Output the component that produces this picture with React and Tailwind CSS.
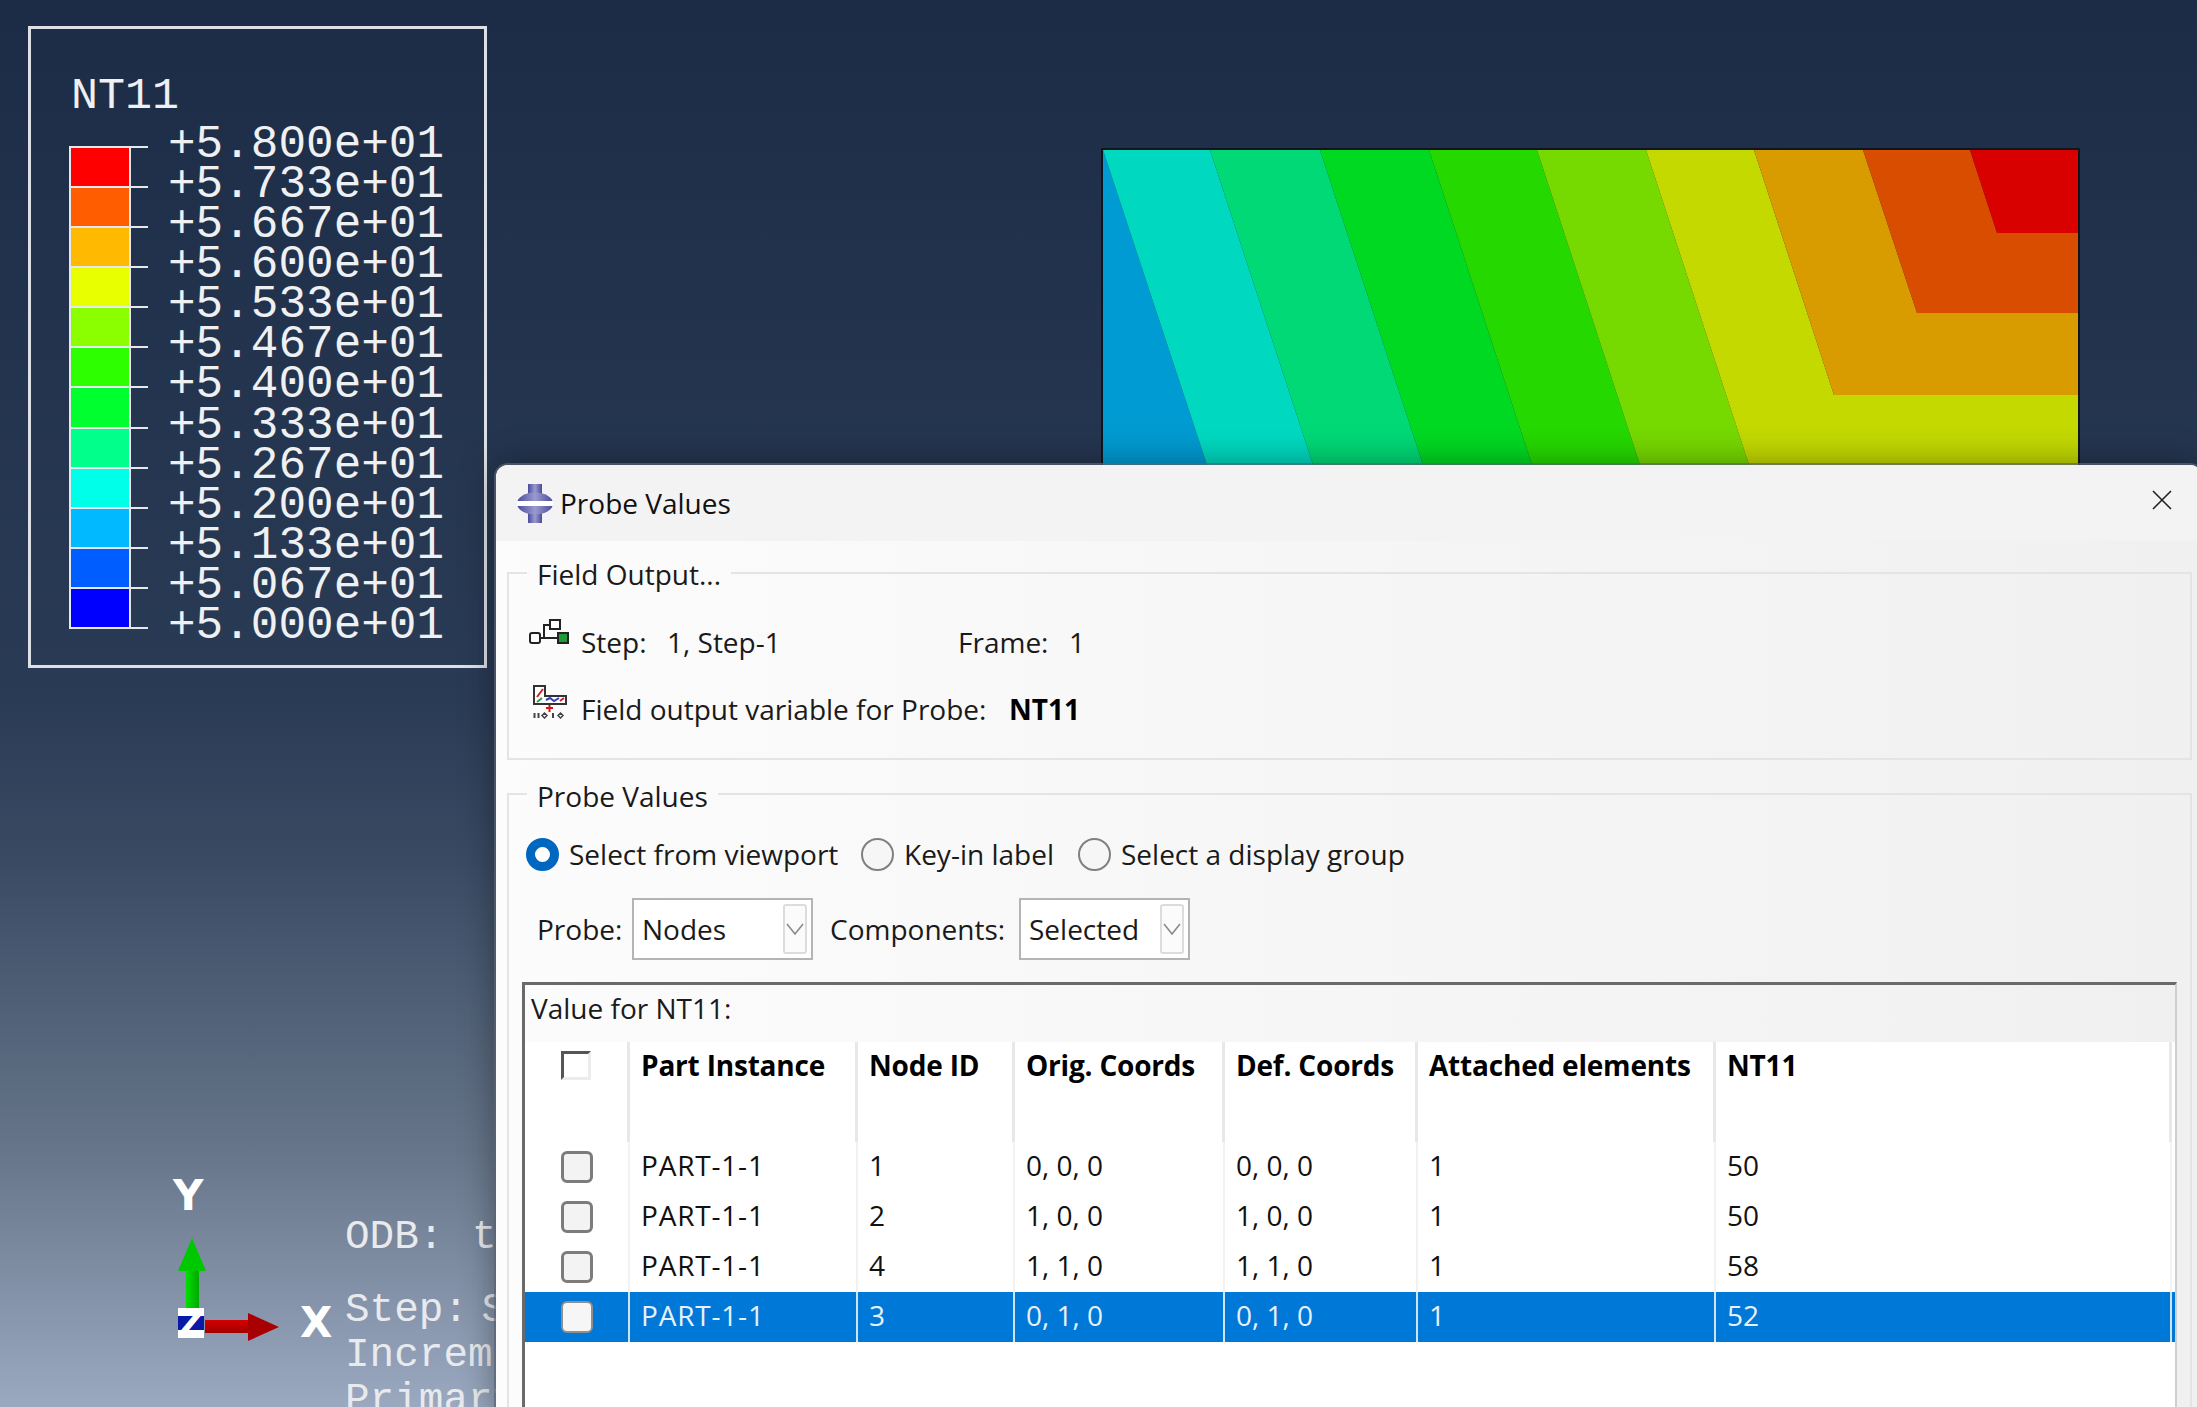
import React from "react";

const LEGEND_COLORS = [
  "bg-[#ff0000]",
  "bg-[#ff5d00]",
  "bg-[#ffb900]",
  "bg-[#e8ff00]",
  "bg-[#8bff00]",
  "bg-[#2eff00]",
  "bg-[#00ff2e]",
  "bg-[#00ff8b]",
  "bg-[#00ffe8]",
  "bg-[#00b9ff]",
  "bg-[#005dff]",
  "bg-[#0000ff]",
];

const LEGEND_VALUES = [
  "+5.800e+01",
  "+5.733e+01",
  "+5.667e+01",
  "+5.600e+01",
  "+5.533e+01",
  "+5.467e+01",
  "+5.400e+01",
  "+5.333e+01",
  "+5.267e+01",
  "+5.200e+01",
  "+5.133e+01",
  "+5.067e+01",
  "+5.000e+01",
];

const BANDS = [
  ["#009bd2", "1103,150 1212,480 1103,480"],
  ["#00d9c0", "1103,150 1210,150 1318,480 1212,480"],
  ["#00d976", "1210,150 1320,150 1428,480 1318,480"],
  ["#00d922", "1320,150 1429,150 1537,480 1428,480"],
  ["#25d900", "1429,150 1537,150 1645,480 1537,480"],
  ["#76d900", "1537,150 1646,150 1754,480 1645,480"],
  ["#c3d900", "1646,150 1754,150 1834,395 2078,395 2078,480 1754,480"],
  ["#d99c00", "1754,150 1863,150 1917,313 2078,313 2078,395 1834,395"],
  ["#d94d00", "1863,150 1970,150 1997,233 2078,233 2078,313 1917,313"],
  ["#d90000", "1970,150 2078,150 2078,233 1997,233"],
];

const ROWS = [
  { part: "PART-1-1", id: "1", orig: "0, 0, 0", def: "0, 0, 0", el: "1", val: "50" },
  { part: "PART-1-1", id: "2", orig: "1, 0, 0", def: "1, 0, 0", el: "1", val: "50" },
  { part: "PART-1-1", id: "4", orig: "1, 1, 0", def: "1, 1, 0", el: "1", val: "58" },
  { part: "PART-1-1", id: "3", orig: "0, 1, 0", def: "0, 1, 0", el: "1", val: "52", selected: true },
];

const HEADERS = ["Part Instance", "Node ID", "Orig. Coords", "Def. Coords", "Attached elements", "NT11"];

const GRID = "grid grid-cols-[105px_228px_157px_210px_193px_298px_456px]";

const Legend = () => (
  <div className="absolute left-[28px] top-[26px] w-[459px] h-[642px] border-[3px] border-[#dde1e6] pl-[38px] pt-[48px] font-['Liberation_Mono',monospace] text-[46px] text-[#eef0f2]">
    <div className="ml-[2px] h-[40px] text-[45px] leading-[40px]">NT11</div>
    <div className="-mt-[4px] flex items-start">
      <div className="mt-[33px] flex flex-col">
        {LEGEND_COLORS.map((color) => (
          <div key={color} className="flex h-[40.08px] items-start">
            <div className={`h-full w-[62px] border-x-2 border-t-2 border-[#e6e8ee] ${color}`} />
            <div className="h-[2px] w-[17px] bg-[#e6e8ee]" />
          </div>
        ))}
        <div className="flex h-[2px]">
          <div className="w-[62px] bg-[#e6e8ee]" />
          <div className="w-[17px] bg-[#e6e8ee]" />
        </div>
      </div>
      <div className="ml-[20px] mt-[12px] flex flex-col">
        {LEGEND_VALUES.map((value) => (
          <div key={value} className="h-[40.08px] leading-[40px]">
            {value}
          </div>
        ))}
      </div>
    </div>
  </div>
);

const Contour = () => (
  <svg
    className="absolute left-[1100px] top-[148px] w-[982px] h-[330px]"
    viewBox="1100 148 982 330"
  >
    {BANDS.map(([fill, points]) => (
      <polygon key={fill} fill={fill} points={points} />
    ))}
    <rect x="1102" y="149" width="977" height="340" fill="none" stroke="#10151c" strokeWidth="2" />
  </svg>
);

const Triad = () => (
  <>
    <svg className="absolute left-[170px] top-[1230px] w-[115px] h-[115px]" viewBox="170 1230 115 115">
      <defs>
        <linearGradient id="greenShaft" x1="0" x2="1" y1="0" y2="0">
          <stop offset="0" stopColor="#00e000" />
          <stop offset="1" stopColor="#00a800" />
        </linearGradient>
        <linearGradient id="redShaft" x1="0" x2="0" y1="0" y2="1">
          <stop offset="0" stopColor="#d40000" />
          <stop offset="1" stopColor="#a00000" />
        </linearGradient>
      </defs>
      <rect x="186" y="1269" width="13" height="40" fill="url(#greenShaft)" />
      <polygon points="192,1238 206,1271 178,1271" fill="#00c800" />
      <rect x="205" y="1320" width="45" height="13" fill="url(#redShaft)" />
      <polygon points="248,1313 279,1327 248,1341" fill="#a80000" />
      <rect x="178" y="1308" width="26" height="30" fill="#ffffff" />
      <rect x="178" y="1316" width="26" height="14" fill="#0a1aa8" />
      <text
        x="191"
        y="1336"
        textAnchor="middle"
        fontFamily="'DejaVu Sans', sans-serif"
        fontWeight="700"
        fontSize="36"
        fill="#ffffff"
      >
        Z
      </text>
    </svg>
    <div className="absolute left-[173px] top-[1173px] font-['DejaVu_Sans',sans-serif] font-bold text-[42px] leading-[46px] text-white">
      Y
    </div>
    <div className="absolute left-[300px] top-[1300px] font-['DejaVu_Sans',sans-serif] font-bold text-[42px] leading-[46px] text-white">
      X
    </div>
  </>
);

const ViewportText = () => (
  <div className="absolute left-[345px] top-[1215px] whitespace-nowrap font-['Liberation_Mono',monospace] text-[41px] leading-[45px] text-[#e8eaee]">
    <div className="mb-[28px] [word-spacing:4px]">ODB: t</div>
    <div className="[word-spacing:-11px]">Step: S</div>
    <div>Increm</div>
    <div>Primary</div>
  </div>
);

const ProbeIcon = () => (
  <svg className="h-[39px] w-[36px]" viewBox="0 0 36 39">
    <defs>
      <linearGradient id="probeFill" x1="0" x2="1" y1="0" y2="0">
        <stop offset="0" stopColor="#4a4a9c" />
        <stop offset="0.5" stopColor="#9a9ad0" />
        <stop offset="1" stopColor="#4a4a9c" />
      </linearGradient>
    </defs>
    <rect x="11" y="0" width="14" height="39" fill="url(#probeFill)" />
    <ellipse cx="18" cy="19.5" rx="18" ry="11" fill="url(#probeFill)" />
    <rect x="0" y="17" width="36" height="5" fill="#ffffff" />
  </svg>
);

const StepIcon = () => (
  <svg className="h-[25px] w-[40px]" viewBox="0 0 40 25" fill="none">
    <rect x="1" y="14" width="10" height="10" rx="2" fill="#fff" stroke="#222" strokeWidth="2" />
    <path d="M11 19h18M15 19V6h6" stroke="#222" strokeWidth="2" />
    <rect x="21" y="1" width="10" height="9" fill="#fff" stroke="#222" strokeWidth="2" />
    <rect x="29" y="14" width="10" height="10" fill="#1f9a3a" stroke="#222" strokeWidth="2" />
  </svg>
);

const FieldIcon = () => (
  <svg className="h-[34px] w-[34px]" viewBox="0 0 34 34" fill="none">
    <path d="M1 1h11v10h21v8H1z" fill="#fff" stroke="#333" strokeWidth="2" />
    <path d="M4 12l6-8" stroke="#d02020" strokeWidth="2" />
    <path d="M4 17l5-4" stroke="#20a040" strokeWidth="2" />
    <path d="M13 15l4-2 4 3 5-3" stroke="#3040c0" strokeWidth="2" />
    <path d="M27 16l4-3" stroke="#d02020" strokeWidth="2" />
    <path d="M16.5 20v7M13 23h7" stroke="#e01010" strokeWidth="2" />
    <path d="M1.5 28v5M5.5 28v5M20 28v5" stroke="#444" strokeWidth="2" />
    <path d="M9 30.500l2.500-2.500 2.500 2.500-2.500 2.500zM25 30.500l2.500-2.500 2.500 2.500-2.500 2.500z" stroke="#444" strokeWidth="1.500" />
  </svg>
);

const Radio = ({ checked, children, className }) => (
  <div className={`flex items-center gap-[10px] ${className}`}>
    {checked ? (
      <div className="h-[33px] w-[33px] rounded-full border-[9px] border-[#0067c0] bg-white" />
    ) : (
      <div className="h-[33px] w-[33px] rounded-full border-2 border-[#808080] bg-[#f6f6f6]" />
    )}
    <span>{children}</span>
  </div>
);

const Select = ({ value, className }) => (
  <div className={`flex h-[62px] items-center justify-between border-2 border-[#b4b4b4] bg-white pl-[8px] pr-[4px] ${className}`}>
    <span>{value}</span>
    <div className="flex h-[50px] w-[24px] items-center justify-center rounded-[3px] border-2 border-[#dcdcdc] bg-[#fbfbfb]">
      <svg className="h-[14px] w-[18px]" viewBox="0 0 18 14" fill="none">
        <path d="M1 2l8 10 8-10" stroke="#8a8a8a" strokeWidth="1.6" />
      </svg>
    </div>
  </div>
);

const Table = () => (
  <div className="flex-1 bg-white">
    <div className={GRID}>
      <div className="flex h-[100px] justify-center border-r-[3px] border-[#e8e8e8] pt-[9px]">
        <div className="h-[29px] w-[30px] border-[3px] border-[#ececec] border-l-[#555555] border-t-[#555555]" />
      </div>
      {HEADERS.map((header) => (
        <div
          key={header}
          className="h-[100px] border-r-[3px] border-[#e8e8e8] pl-[11px] pt-[5px] font-bold tracking-[-0.2px] text-black"
        >
          {header}
        </div>
      ))}
    </div>
    {ROWS.map((row) => (
      <div
        key={row.id}
        className={`${GRID} h-[50px] ${row.selected ? "bg-[#0078d7] text-[#e6f1fb]" : "text-[#111111]"}`}
      >
        <div className={`flex items-center justify-center border-r-2 ${row.selected ? "border-[#cfe3f6]" : "border-[#f2f2f2]"}`}>
          <div
            className={`h-[32px] w-[32px] rounded-[6px] ${
              row.selected ? "border-2 border-[#8f8f8f] bg-[#f6f6f6]" : "border-[3px] border-[#7c7c7c] bg-[#f3f3f3]"
            }`}
          />
        </div>
        {[row.part, row.id, row.orig, row.def, row.el, row.val].map((cell, i) => (
          <div
            key={i}
            className={`flex items-center border-r-2 pb-[4px] pl-[11px] ${i === 0 ? "tracking-[0.8px]" : ""} ${
              row.selected ? "border-[#cfe3f6]" : "border-[#f2f2f2]"
            }`}
          >
            {cell}
          </div>
        ))}
      </div>
    ))}
  </div>
);

const Dialog = () => (
  <div className="absolute left-[496px] top-[465px] flex h-[960px] w-[1706px] flex-col overflow-hidden rounded-t-[12px] bg-[linear-gradient(90deg,#fcfcfc,#f0f0f0)] font-['Open_Sans',sans-serif] text-[28px] leading-[36px] text-[#1a1a1a] shadow-[0_0_0_2px_rgba(90,100,115,0.7),0_0_36px_rgba(0,0,0,0.4)]">
    <div className="flex h-[76px] shrink-0 items-center justify-between bg-[#f3f3f3] pl-[21px] pr-[30px]">
      <div className="flex items-center gap-[7px] text-[#111111]">
        <ProbeIcon />
        <span>Probe Values</span>
      </div>
      <svg className="mb-[6px] h-[20px] w-[20px]" viewBox="0 0 20 20" fill="none">
        <path d="M1 1l18 18M19 1L1 19" stroke="#222222" strokeWidth="1.6" />
      </svg>
    </div>

    <div className="flex flex-1 flex-col pl-[11px]">
      <fieldset className="mt-[13px] w-[1685px] border-2 border-[#e4e4e4] pb-[31px]">
        <legend className="ml-[18px] px-[10px] pt-[2px]">Field Output...</legend>
        <div className="flex flex-col gap-[31px] pl-[20px] pt-[32px]">
          <div className="flex h-[36px] items-center">
            <div className="mb-[22px] w-[52px]">
              <StepIcon />
            </div>
            <span className="w-[86px]">Step:</span>
            <span className="w-[291px]">1, Step-1</span>
            <span className="w-[111px]">Frame:</span>
            <span>1</span>
          </div>
          <div className="flex h-[36px] items-center">
            <div className="mb-[14px] w-[52px] pl-[4px]">
              <FieldIcon />
            </div>
            <span className="w-[428px]">Field output variable for Probe:</span>
            <span className="font-bold text-black">NT11</span>
          </div>
        </div>
      </fieldset>

      <fieldset className="mt-[14px] flex-1 w-[1685px] border-2 border-[#e4e4e4]">
        <legend className="ml-[18px] px-[10px] pt-[4px]">Probe Values</legend>
        <div className="flex h-[36px] items-center pl-[17px] mt-[22px]">
          <Radio checked className="w-[335px]">Select from viewport</Radio>
          <Radio className="w-[217px]">Key-in label</Radio>
          <Radio>Select a display group</Radio>
        </div>
        <div className="mt-[26px] flex items-center pl-[28px]">
          <span className="w-[95px]">Probe:</span>
          <Select value="Nodes" className="w-[181px]" />
          <span className="ml-[17px] w-[189px]">Components:</span>
          <Select value="Selected" className="w-[171px]" />
        </div>
        <div className="ml-[13px] mt-[22px] flex h-[500px] w-[1655px] flex-col border-l-[3px] border-r-2 border-t-[3px] border-l-[#6a6a6a] border-r-[#cfcfcf] border-t-[#6a6a6a]">
          <div className="h-[57px] shrink-0 pl-[6px] pt-[5px]">Value for NT11:</div>
          <Table />
        </div>
      </fieldset>
    </div>
  </div>
);

const App = () => {
  return (
    <div className="relative h-[1407px] w-[2197px] overflow-hidden bg-[linear-gradient(180deg,#1c2c47_0px,#2a3b55_700px,#3a4a63_860px,#667589_1150px,#9aa9c0_1407px)]">
      <Legend />
      <Contour />
      <Triad />
      <ViewportText />
      <Dialog />
    </div>
  );
};

export default App;
